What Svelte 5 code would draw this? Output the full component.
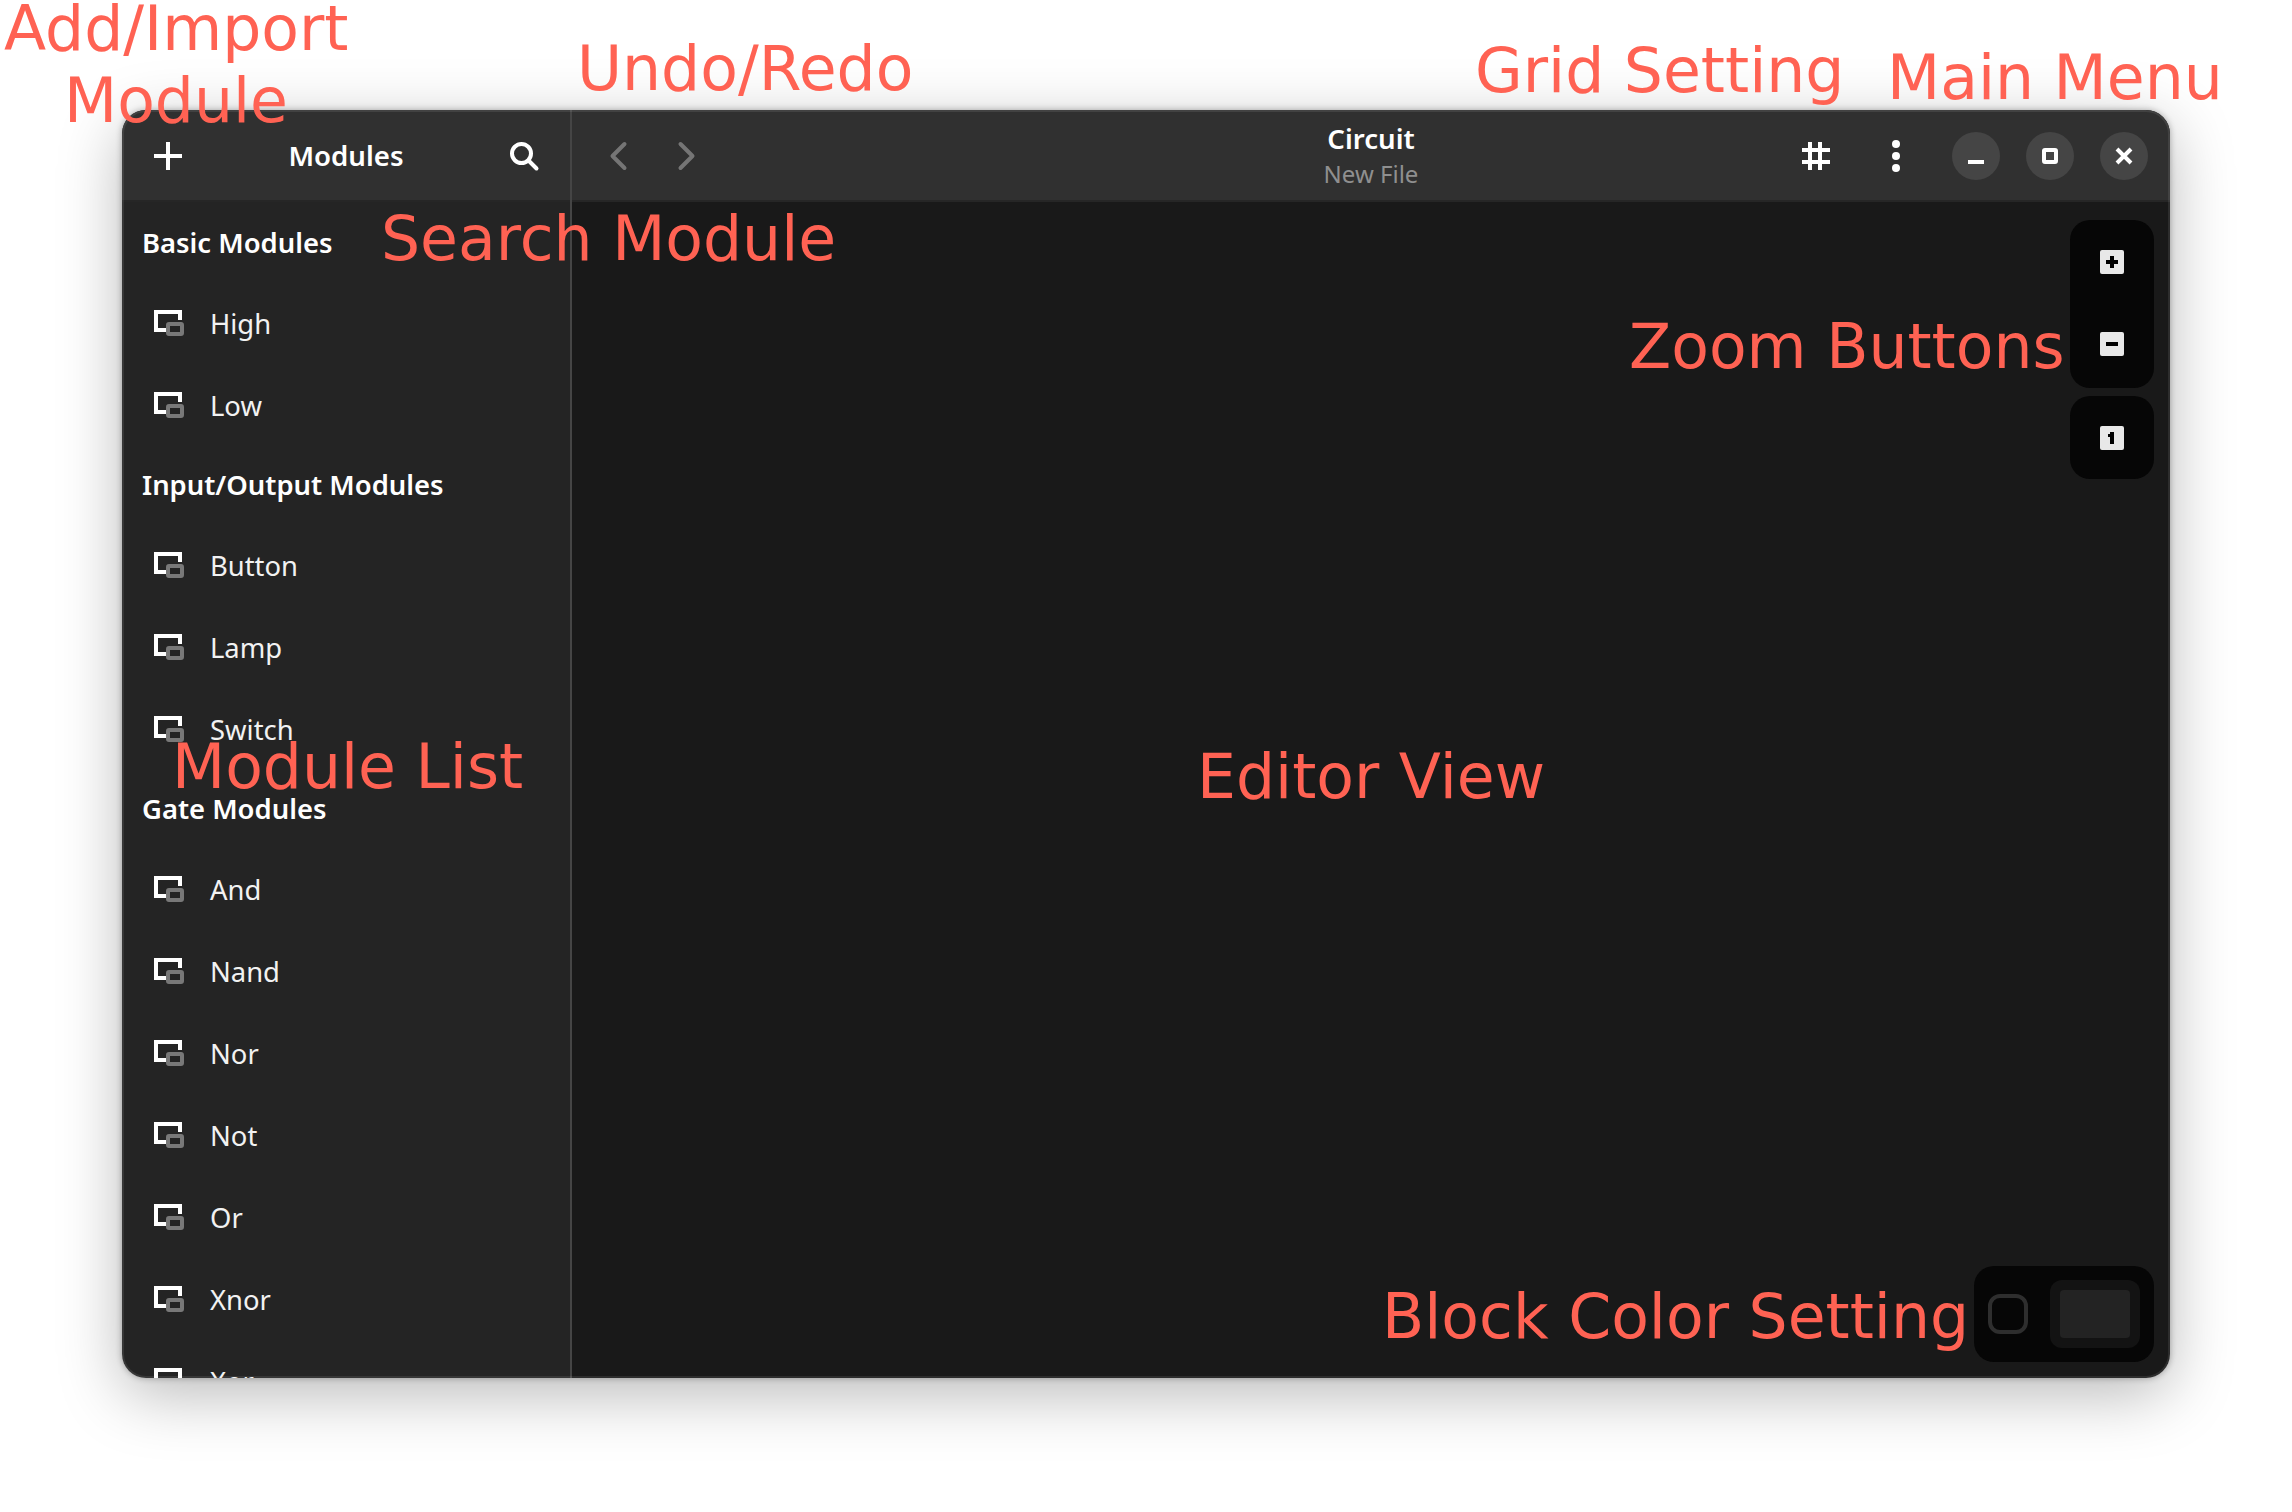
<script lang="ts">
	const sections = [
		{ title: 'Basic Modules', items: ['High', 'Low'] },
		{ title: 'Input/Output Modules', items: ['Button', 'Lamp', 'Switch'] },
		{ title: 'Gate Modules', items: ['And', 'Nand', 'Nor', 'Not', 'Or', 'Xnor', 'Xor'] }
	];
</script>

<div class="page">
	<div class="window">
		<aside class="sidebar">
			<header class="bar side-bar">
				<svg class="icon" viewBox="0 0 28 28"><path d="M14 0V28M0 14H28" /></svg>
				<span class="bar-title">Modules</span>
				<svg class="icon" viewBox="0 0 28 28">
					<circle cx="11.5" cy="11.5" r="9.5" />
					<path d="M18.5 18.5L26.5 26.5" stroke-linecap="round" />
				</svg>
			</header>
			<div class="list">
				{#each sections as section}
					<h2>{section.title}</h2>
					{#each section.items as item}
						<div class="row">
							<svg class="module-icon" viewBox="0 0 30 26">
								<path d="M12 20H2V2H26V10" stroke="#fff" />
								<rect x="14" y="14" width="14" height="10" rx="1" stroke="#787878" />
							</svg>
							<span>{item}</span>
						</div>
					{/each}
				{/each}
			</div>
		</aside>

		<main class="main">
			<header class="bar main-bar">
				<div class="nav">
					<svg class="icon dim" viewBox="0 0 28 28"><path d="M19.5 2L7.5 14L19.5 26" stroke-linecap="round" stroke-linejoin="round" /></svg>
					<svg class="icon dim" viewBox="0 0 28 28"><path d="M7.5 2L19.5 14L7.5 26" stroke-linecap="round" stroke-linejoin="round" /></svg>
				</div>
				<div class="title">
					<span class="bar-title">Circuit</span>
					<span class="subtitle">New File</span>
				</div>
				<div class="actions">
					<svg class="icon" viewBox="0 0 28 28"><path d="M8 0V28M18 0V28M0 8H28M0 20H28" /></svg>
					<svg class="icon menu" viewBox="0 0 28 28">
						<circle cx="14" cy="2" r="4" />
						<circle cx="14" cy="14" r="4" />
						<circle cx="14" cy="26" r="4" />
					</svg>
					<div class="win-buttons">
						<span class="win-btn"><svg viewBox="0 0 48 48"><path d="M16 30H32" /></svg></span>
						<span class="win-btn"><svg viewBox="0 0 48 48"><rect x="18" y="18" width="12" height="12" rx="1" /></svg></span>
						<span class="win-btn"><svg viewBox="0 0 48 48"><path d="M17 17L31 31M31 17L17 31" /></svg></span>
					</div>
				</div>
			</header>

			<div class="editor">
				<div class="zoom-tools">
					<div class="float-panel zoom-pair">
						<svg class="zoom-icon" viewBox="0 0 24 24"><rect width="24" height="24" rx="2" fill="#e8e8e8" /><path d="M6 12H18M12 6V18" stroke="#000" stroke-width="4" /></svg>
						<svg class="zoom-icon" viewBox="0 0 24 24"><rect width="24" height="24" rx="2" fill="#e8e8e8" /><path d="M6 12H18" stroke="#000" stroke-width="4" /></svg>
					</div>
					<div class="float-panel zoom-one">
						<svg class="zoom-icon" viewBox="0 0 24 24"><rect width="24" height="24" rx="2" fill="#e8e8e8" /><path d="M8 8H10V6H14V18H10V11H8Z" fill="#000" /></svg>
					</div>
				</div>
				<div class="float-panel color-tools">
					<span class="check"></span>
					<span class="swatch"><span></span></span>
				</div>
			</div>
		</main>
	</div>

	<span class="note n-add">Add/Import<br />Module</span>
	<span class="note n-undo">Undo/Redo</span>
	<span class="note n-grid">Grid Setting</span>
	<span class="note n-menu">Main Menu</span>
	<span class="note n-search">Search Module</span>
	<span class="note n-zoom">Zoom Buttons</span>
	<span class="note n-list">Module List</span>
	<span class="note n-editor">Editor View</span>
	<span class="note n-color">Block Color Setting</span>
</div>

<style>
	:global(body) {
		background: #fff;
	}

	.page {
		position: relative;
		box-sizing: border-box;
		width: 2292px;
		height: 1512px;
		padding: 110px 122px 134px;
		overflow: hidden;
		font-family: 'Noto Sans', sans-serif;
	}

	.window {
		position: relative;
		display: flex;
		height: 100%;
		border-radius: 24px;
		overflow: hidden;
		color: #fff;
		box-shadow:
			0 0 6px rgba(0, 0, 0, 0.3),
			0 16px 64px rgba(0, 0, 0, 0.28);
	}

	.window::after {
		content: '';
		position: absolute;
		inset: 0;
		border: 2px solid rgba(255, 255, 255, 0.09);
		border-radius: 24px;
		pointer-events: none;
	}

	.bar {
		flex: none;
		box-sizing: border-box;
		height: 92px;
		background: #303030;
		box-shadow: inset 0 -2px #262626;
	}

	.sidebar {
		flex: none;
		display: flex;
		flex-direction: column;
		box-sizing: border-box;
		width: 450px;
		background: #242424;
		border-right: 2px solid #454545;
	}

	.side-bar {
		display: flex;
		align-items: center;
		justify-content: space-between;
		padding: 0 32px;
	}

	.side-bar .bar-title {
		padding-bottom: 2px;
	}

	.bar-title {
		font-size: 27.6px;
		font-weight: 600;
		line-height: 36px;
	}

	.icon {
		flex: none;
		width: 28px;
		height: 28px;
		overflow: visible;
		fill: none;
		stroke: #fff;
		stroke-width: 4;
	}

	.icon.dim {
		stroke: #757575;
	}

	.icon.menu {
		fill: #fff;
		stroke: none;
	}

	.list {
		flex: 1;
		min-height: 0;
		overflow: hidden;
		padding-top: 2px;
	}

	h2 {
		box-sizing: border-box;
		height: 78px;
		margin: 0;
		padding-left: 20px;
		font-size: 27.4px;
		font-weight: 600;
		line-height: 78px;
	}

	.row {
		display: flex;
		align-items: center;
		gap: 26px;
		height: 82px;
		padding-left: 32px;
		font-size: 27.4px;
		color: #f2f2f2;
	}

	.module-icon {
		flex: none;
		width: 30px;
		height: 26px;
		fill: none;
		stroke-width: 4;
	}

	.main {
		flex: 1;
		display: flex;
		flex-direction: column;
		min-width: 0;
		background: #191919;
	}

	.main-bar {
		display: grid;
		grid-template-columns: 1fr auto 1fr;
		align-items: center;
	}

	.nav {
		display: flex;
		gap: 40px;
		padding-left: 33px;
	}

	.title {
		display: flex;
		flex-direction: column;
		align-items: center;
	}

	.subtitle {
		font-size: 24px;
		line-height: 36px;
		color: #8f8f8f;
	}

	.actions {
		display: flex;
		align-items: center;
		justify-content: flex-end;
		gap: 52px;
		padding-right: 22px;
	}

	.win-buttons {
		display: flex;
		gap: 26px;
		margin-left: -10px;
	}

	.win-btn {
		width: 48px;
		height: 48px;
		border-radius: 50%;
		background: #454545;
	}

	.win-btn svg {
		display: block;
		width: 48px;
		height: 48px;
		fill: none;
		stroke: #fff;
		stroke-width: 4;
	}

	.editor {
		position: relative;
		flex: 1;
	}

	.float-panel {
		background: #060606;
		border-radius: 20px;
	}

	.zoom-tools {
		position: absolute;
		top: 18px;
		right: 16px;
		display: flex;
		flex-direction: column;
		gap: 8px;
		width: 84px;
	}

	.zoom-pair,
	.zoom-one {
		display: flex;
		flex-direction: column;
		align-items: center;
	}

	.zoom-pair {
		gap: 58px;
		padding: 30px 0 32px;
	}

	.zoom-one {
		padding: 30px 0 29px;
	}

	.zoom-icon {
		display: block;
		width: 24px;
		height: 24px;
	}

	.color-tools {
		position: absolute;
		right: 16px;
		bottom: 16px;
		box-sizing: border-box;
		display: flex;
		align-items: center;
		gap: 22px;
		width: 180px;
		height: 96px;
		padding-left: 14px;
	}

	.check {
		box-sizing: border-box;
		width: 40px;
		height: 40px;
		border: 4px solid #2e2e2e;
		border-radius: 12px;
	}

	.swatch {
		box-sizing: border-box;
		width: 90px;
		height: 68px;
		padding: 10px;
		background: #131313;
		border-radius: 12px;
	}

	.swatch span {
		display: block;
		height: 48px;
		background: #232323;
		border-radius: 4px;
	}

	.note {
		position: absolute;
		font-family: 'DejaVu Sans', sans-serif;
		font-size: 61.6px;
		line-height: 72px;
		color: #ff6253;
		white-space: nowrap;
		text-align: center;
	}

	.n-add { left: 4px; top: -7px; width: 344px; }
	.n-undo { left: 577px; top: 33px; }
	.n-grid { left: 1475px; top: 35px; }
	.n-menu { left: 1887px; top: 42px; }
	.n-search { left: 381px; top: 203px; }
	.n-zoom { left: 1629px; top: 311px; }
	.n-list { left: 172px; top: 731px; }
	.n-editor { left: 1197px; top: 741px; }
	.n-color { left: 1382px; top: 1281px; }
</style>
